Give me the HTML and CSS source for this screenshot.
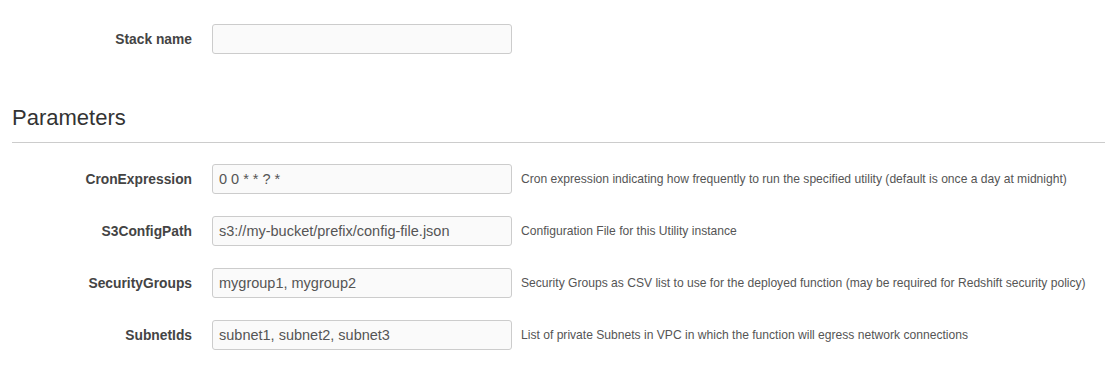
FILE: index.html
```html
<!DOCTYPE html>
<html>
<head>
<meta charset="utf-8">
<link rel="stylesheet" href="styles.css">
</head>
<body>
<div class="page">
  <div class="row row-stack">
    <label class="label">Stack name</label>
    <div class="input"></div>
  </div>
  <h3 class="section-title">Parameters</h3>
  <div class="params">
    <div class="row">
      <label class="label">CronExpression</label>
      <div class="input">0 0 * * ? *</div>
      <span class="help">Cron expression indicating how frequently to run the specified utility (default is once a day at midnight)</span>
    </div>
    <div class="row">
      <label class="label">S3ConfigPath</label>
      <div class="input">s3://my-bucket/prefix/config-file.json</div>
      <span class="help">Configuration File for this Utility instance</span>
    </div>
    <div class="row">
      <label class="label">SecurityGroups</label>
      <div class="input">mygroup1, mygroup2</div>
      <span class="help">Security Groups as CSV list to use for the deployed function (may be required for Redshift security policy)</span>
    </div>
    <div class="row">
      <label class="label">SubnetIds</label>
      <div class="input">subnet1, subnet2, subnet3</div>
      <span class="help">List of private Subnets in VPC in which the function will egress network connections</span>
    </div>
  </div>
</div>
</body>
</html>
```

FILE: styles.css
```css
html, body {
  margin: 0;
  padding: 0;
  background: #fff;
}
body {
  font-family: "Liberation Sans", Arial, sans-serif;
  color: #444;
}
.page {
  padding: 24px 0 0 12px;
}
.row {
  display: flex;
  align-items: center;
  height: 30px;
}
.label {
  width: 180px;
  text-align: right;
  font-weight: bold;
  font-size: 13.8px;
  color: #444;
  padding-right: 20px;
}
.input {
  box-sizing: border-box;
  width: 300px;
  height: 30px;
  border: 1px solid #ccc;
  border-radius: 3px;
  background: #fafafa;
  padding: 0 6px;
  font-size: 14.5px;
  line-height: 28px;
  color: #555;
  white-space: nowrap;
  overflow: hidden;
}
.help {
  margin-left: 9px;
  font-size: 12.1px;
  color: #555;
  white-space: nowrap;
}
.section-title {
  margin: 48px 0 0 0;
  font-size: 22px;
  font-weight: normal;
  color: #333;
  line-height: 32px;
  padding-bottom: 8px;
  border-bottom: 1px solid #ccc;
}
.params {
  padding-top: 21px;
  display: flex;
  flex-direction: column;
  gap: 22px;
}
```
